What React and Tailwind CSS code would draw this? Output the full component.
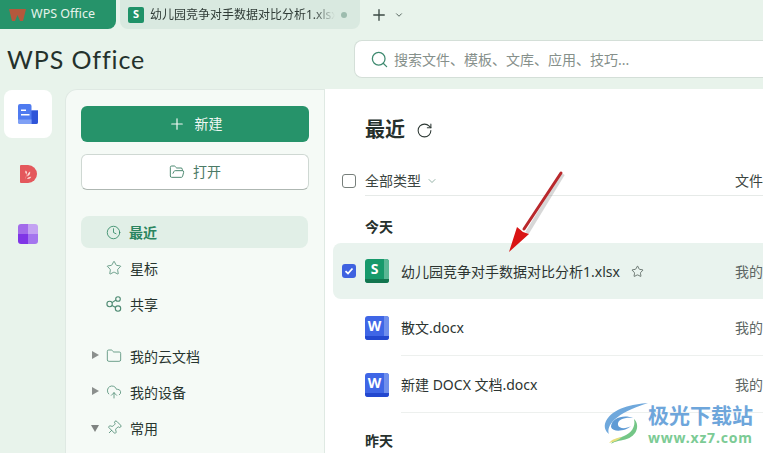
import {
  ChevronDown,
  Clock,
  CloudUpload,
  Folder,
  FolderOpen,
  Pin,
  Plus,
  RotateCw,
  Search,
  Star,
} from "lucide-react";

const FONT = "[font-family:'Noto_Sans','Noto_Sans_CJK_SC',sans-serif]";

// Small share glyph, three open circles
const ShareIcon = () => (
  <svg width="16" height="16" viewBox="0 0 16 16" fill="none" stroke="#4d8a72" strokeWidth="1.1">
    <circle cx="3.6" cy="8" r="2.7" />
    <circle cx="12" cy="3" r="2.3" />
    <circle cx="12" cy="12.6" r="2.7" />
    <path d="M6 6.6 10 4M6 9.4l3.7 2" />
  </svg>
);

const DocsRailIcon = () => (
  <svg width="20" height="20" viewBox="0 0 20 20">
    <path d="M0 2a2 2 0 0 1 2-2h9.500a2 2 0 0 1 2 2v4.500H20V18a2 2 0 0 1-2 2H2a2 2 0 0 1-2-2z" fill="#4f7bf0" />
    <path d="M13.500 6.500H20V18a2 2 0 0 1-2 2h-4.500z" fill="#2f55d8" />
    <path d="M0 15.500h13.500V20H2a2 2 0 0 1-2-2z" fill="#7fa0f5" />
    <path d="M3 5.500h5v1.500H3zM3 10h8.500v1.500H3z" fill="#fff" />
  </svg>
);

const PdfRailIcon = () => (
  <svg width="17" height="18" viewBox="0 0 17 18">
    <path d="M0 1a1 1 0 0 1 1-1h7a8.800 8.800 0 0 1 0 18H1a1 1 0 0 1-1-1z" fill="#e4585c" />
    <path d="M5.500 14.500c.2-3 .8-4.800 1.500-6.500M6 8.800C5 7.500 5 6.500 5.800 5.500 7 6.500 7.300 7.500 6.700 8.800zM7.200 11.500c0-2 1-4 2.900-5 .5 2-.6 4-2.900 5zM7 14c1-1.700 2.500-2.400 4.300-2.200-.8 1.700-2.300 2.500-4.300 2.200z" fill="#fbdcd6" />
  </svg>
);

const AppsRailIcon = () => (
  <div className="grid h-5 w-5 grid-cols-2 grid-rows-2 overflow-hidden rounded-[3px]">
    <div className="bg-[#a26bea]" />
    <div className="bg-[#c3a2f2]" />
    <div className="bg-[#7f35e6]" />
    <div className="bg-[#a475ee]" />
  </div>
);

const FileIcon = ({ letter, face, edge, foot }) => (
  <div className={`relative h-6 w-6 shrink-0 overflow-hidden rounded-[3px] ${face}`}>
    <div className={`absolute inset-y-0 right-0 w-[5px] ${edge}`} />
    <div className={`absolute inset-x-0 bottom-0 h-[4px] ${foot}`} />
    <span className="absolute left-0 top-0 w-[19px] text-center text-[14px] font-bold leading-[19px] text-white">
      {letter}
    </span>
  </div>
);

const NavRow = ({ icon, label, active, caret, className = "" }) => (
  <div
    className={`relative flex h-8 w-[227px] items-center gap-[8px] rounded-lg pl-[25px] text-[14px] ${
      active ? "bg-[#e1efe7] font-bold text-[#2b8560]" : "text-[#27352f]"
    } ${className}`}
  >
    {caret === "right" && (
      <span className="absolute left-[11px] top-[11px] h-0 w-0 border-y-[4px] border-l-[7px] border-y-transparent border-l-[#8b8f8d]" />
    )}
    {caret === "down" && (
      <span className="absolute left-[10px] top-[13px] h-0 w-0 border-x-[4px] border-t-[7px] border-x-transparent border-t-[#7f8381]" />
    )}
    {icon}
    <span>{label}</span>
  </div>
);

const Checkbox = ({ checked }) =>
  checked ? (
    <div className="flex h-[14px] w-[14px] items-center justify-center rounded-[3px] bg-[#3f62e0]">
      <svg width="10" height="10" viewBox="0 0 10 10" fill="none" stroke="#fff" strokeWidth="1.8">
        <path d="M1.500 5.200 4 7.500l4.500-5" />
      </svg>
    </div>
  ) : (
    <div className="h-[14px] w-[14px] rounded-[3px] border border-[#777f7b] bg-white" />
  );

const FileRow = ({ name, icon, selected, star, divider }) => (
  <div
    className={`flex items-center pl-[9px] ${
      selected ? "h-[56px] rounded-l-lg bg-[#e9f3ee]" : "h-[57px]"
    }`}
  >
    <div className="w-[23px] shrink-0">{selected && <Checkbox checked />}</div>
    {icon}
    <div
      className={`ml-[12px] flex h-full flex-1 items-center ${
        divider ? "border-b border-[#edf0ee]" : ""
      }`}
    >
      <div className="flex w-[334px] shrink-0 items-center">
        <span className="text-[14px] text-[#2c3431]">{name}</span>
        {star && <Star size={13} strokeWidth={1.3} className="ml-[11px] text-[#3d4a45]" />}
      </div>
      <span className="text-[14px] text-[#5d6663]">我的</span>
    </div>
  </div>
);

const Watermark = () => (
  <div className="absolute left-[603px] top-[402px] flex items-start">
    <svg width="46" height="42" viewBox="0 0 46 42" fill="none">
      <path d="M45 1C30 2 10 6 3 19c-3 6 0 11 3 13C3 24 12 11 45 1z" fill="#6fa8dc" />
      <path d="M8 25c0-9 13-13 22-9-7-1-16 1-15 7 1 4 8 4 13 1-5 5-18 7-20 1z" fill="#5f9bd5" />
      <path d="M31 17c7 7 2 19-11 21-6 1-9 2-12 4 3-5 8-6 13-8 7-3 12-9 10-17z" fill="#74c687" />
      <path d="M6 41c3-4 8-5 13-6-3 3-8 5-13 6z" fill="#e6df7c" />
    </svg>
    <div className="ml-[-1px] flex flex-col items-start">
      <span className="text-[21px] font-bold leading-[26px] text-[#6ea6db]">极光下载站</span>
      <span className="mt-[1px] text-[14px] font-bold leading-[18px] tracking-[0.8px] text-[#7ccb95]">www.xz7.com</span>
    </div>
  </div>
);

const Arrow = () => (
  <svg className="absolute left-[500px] top-[165px]" width="70" height="95" viewBox="0 0 70 95" fill="none">
    <path d="M63 9 27 68" stroke="#8c8c8c" strokeOpacity="0.35" strokeWidth="4" />
    <path d="M61 8 24 64" stroke="#b9282c" strokeWidth="3" strokeLinecap="round" />
    <path d="M9 87 17 62l6 5 6 2z" fill="#d91414" />
  </svg>
);

const App = () => {
  return (
    <div className={`relative flex h-[453px] w-[763px] flex-col overflow-hidden bg-[#e8f3eb] ${FONT}`}>
      {/* Tabs */}
      <div className="flex h-[29px] shrink-0 items-stretch">
        <div className="flex w-[116px] items-center rounded-br-lg bg-[#26936a] pl-[9px] text-[12.5px] text-[#e6f3ec]">
          <svg width="17" height="12" viewBox="0 0 17 12">
            <path d="M0 0h17l-3 12h-3L8.500 6 6 12H3z" fill="#b4583c" />
          </svg>
          <span className="ml-[5px]">WPS Office</span>
        </div>
        <div className="ml-[4px] flex w-[240px] items-center rounded-b-lg bg-[#d9e9e0] pl-[8px] text-[12px] text-[#2f3b36]">
          <div className="flex h-4 w-4 shrink-0 items-center justify-center rounded-[2px] bg-[#1f9268] text-[11px] font-bold text-white">
            S
          </div>
          <span className="ml-[6px] w-[185px] overflow-hidden whitespace-nowrap [mask-image:linear-gradient(to_right,black_88%,transparent)]">
            幼儿园竞争对手数据对比分析1.xlsx
          </span>
          <span className="ml-[6px] h-[6px] w-[6px] rounded-full bg-[#9dbcae]" />
        </div>
        <div className="ml-[10px] flex items-center text-[#3b4a44]">
          <Plus size={18} strokeWidth={1.8} />
          <ChevronDown size={10} strokeWidth={2} className="ml-[6px]" />
        </div>
      </div>

      {/* Header */}
      <div className="flex h-[60px] shrink-0 items-center">
        <span className="ml-[7px] w-[347px] text-[25px] font-normal leading-none tracking-[0.9px] text-[#24312c] [font-family:'Lato',sans-serif]">
          WPS Office
        </span>
        <div className="flex h-[38px] flex-1 items-center rounded-l-lg border border-r-0 border-[#d4dfd8] bg-white pl-[15px] text-[14px] text-[#86908b]">
          <Search size={19} strokeWidth={1.6} className="text-[#3f8a70]" />
          <span className="ml-[5px]">搜索文件、模板、文库、应用、技巧...</span>
        </div>
      </div>

      <div className="flex min-h-0 flex-1">
        {/* Rail */}
        <div className="flex w-[65px] shrink-0 flex-col items-start pl-[4px] pt-[1px]">
          <div className="flex h-12 w-12 items-center justify-center rounded-lg bg-white">
            <DocsRailIcon />
          </div>
          <div className="mt-[24px] flex h-[24px] w-12 items-center justify-center">
            <PdfRailIcon />
          </div>
          <div className="mt-[38px] flex h-5 w-12 items-center justify-center">
            <AppsRailIcon />
          </div>
        </div>

        {/* Side panel */}
        <div className="w-[260px] shrink-0 rounded-tl-xl border-l border-t border-r border-[#dfe9e3] bg-[#f5faf6] pl-[15px] pt-[16px]">
          <div className="flex h-9 w-[228px] items-center justify-center gap-[9px] rounded-md bg-[#26936a] text-[14px] text-[#f1f8f4]">
            <Plus size={18} strokeWidth={1.6} />
            <span className="mb-[2px]">新建</span>
          </div>
          <div className="mt-3 flex h-9 w-[228px] items-center justify-center gap-[8px] rounded-md border border-[#cfd8d3] border-b-[#aeb7b2] bg-white text-[14px] text-[#4b7a66]">
            <FolderOpen size={16} strokeWidth={1.5} className="text-[#4d8a72]" />
            <span className="mb-[2px]">打开</span>
          </div>
          <NavRow className="mt-[26px]" active label="最近" icon={<Clock size={15} strokeWidth={1.3} />} />
          <NavRow className="mt-[4px]" label="星标" icon={<Star size={16} strokeWidth={1.2} className="text-[#4d8a72]" />} />
          <NavRow className="mt-[4px]" label="共享" icon={<ShareIcon />} />
          <NavRow className="mt-[20px]" caret="right" label="我的云文档" icon={<Folder size={16} strokeWidth={1.2} className="text-[#4d8a72]" />} />
          <NavRow className="mt-[4px]" caret="right" label="我的设备" icon={<CloudUpload size={16} strokeWidth={1.2} className="text-[#4d8a72]" />} />
          <NavRow className="mt-[4px]" caret="down" label="常用" icon={<Pin size={16} strokeWidth={1.2} className="rotate-45 text-[#4d8a72]" />} />
        </div>

        {/* Main list */}
        <div className="min-w-0 flex-1 bg-white pl-[8px]">
          <div className="mt-[27px] flex h-7 items-center pl-[32px]">
            <span className="text-[20px] font-bold text-[#26302c]">最近</span>
            <RotateCw size={17} strokeWidth={1.5} className="ml-[11px] text-[#2f3a36]" />
          </div>
          <div className="mt-[22px] flex h-[30px] items-center pl-[9px]">
            <Checkbox />
            <div className="ml-[9px] flex h-full flex-1 items-center border-b border-[#e6eae8]">
              <span className="text-[14px] text-[#3b4541]">全部类型</span>
              <ChevronDown size={12} strokeWidth={1.3} className="ml-[5px] text-[#5d8a78]" />
              <span className="ml-[297px] text-[14px] text-[#3b4541]">文件</span>
            </div>
          </div>
          <div className="pl-[32px] pt-[21px] text-[14px] font-bold leading-5 text-[#26302c]">今天</div>
          <div className="mt-[6px]">
            <FileRow
              selected
              star
              name="幼儿园竞争对手数据对比分析1.xlsx"
              icon={<FileIcon letter="S" face="bg-[#17996b]" edge="bg-[#5bb795]" foot="bg-[#12754f]" />}
            />
            <FileRow
              divider
              name="散文.docx"
              icon={<FileIcon letter="W" face="bg-[#3f66e6]" edge="bg-[#6f8fec]" foot="bg-[#2348cf]" />}
            />
            <FileRow
              divider
              name="新建 DOCX 文档.docx"
              icon={<FileIcon letter="W" face="bg-[#3f66e6]" edge="bg-[#6f8fec]" foot="bg-[#2348cf]" />}
            />
          </div>
          <div className="pl-[32px] pt-[18px] text-[14px] font-bold leading-5 text-[#26302c]">昨天</div>
        </div>
      </div>

      <Arrow />
      <Watermark />
    </div>
  );
};

export default App;
